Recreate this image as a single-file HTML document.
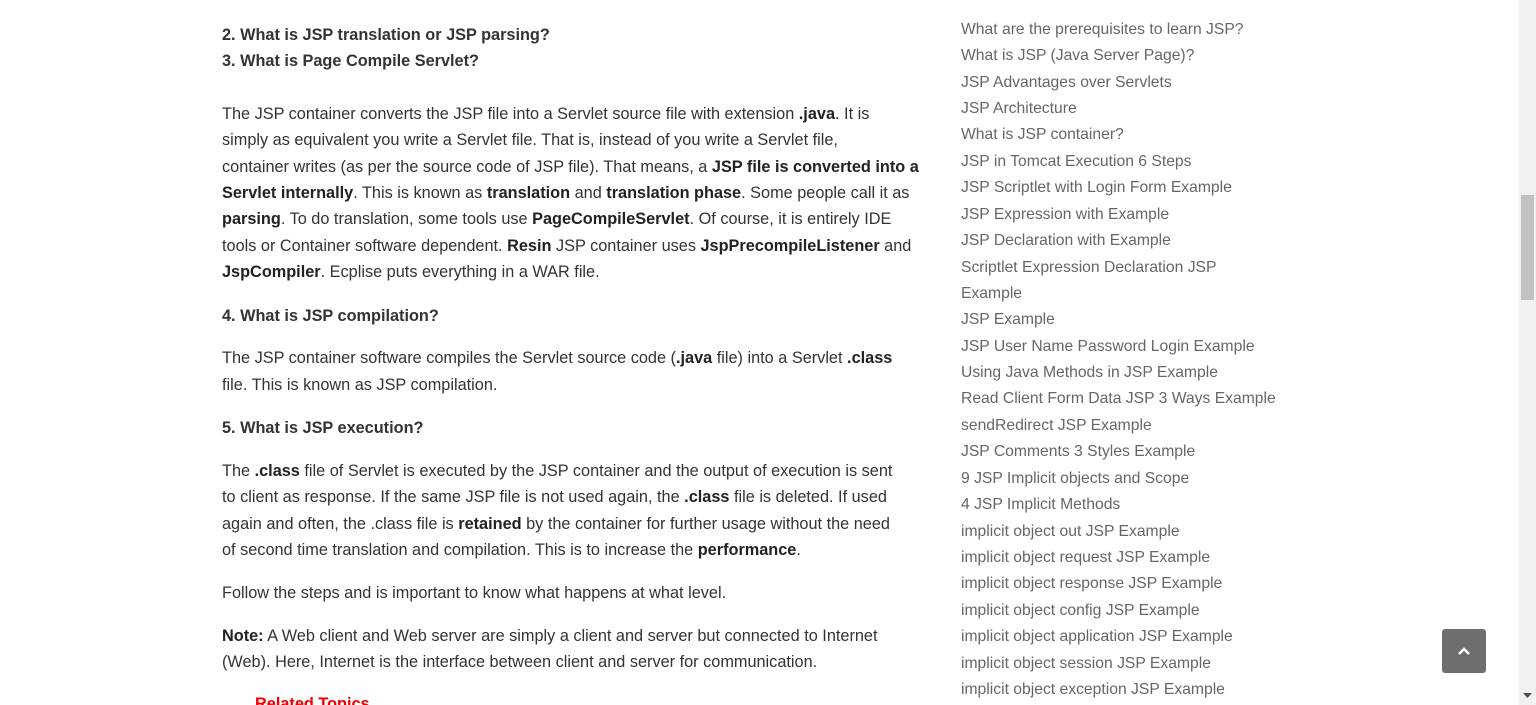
<!DOCTYPE html>
<html><head><meta charset="utf-8"><style>
html,body{margin:0;padding:0;background:#fff;width:1536px;height:705px;overflow:hidden;position:relative;font-family:"Liberation Sans",sans-serif;}
.l{position:absolute;left:222px;white-space:nowrap;font-size:16.3px;line-height:26px;color:#333;}
.h{font-weight:bold;color:#333;}
b{color:#222;}
.s{position:absolute;left:961px;white-space:nowrap;font-size:15.7px;line-height:26px;color:#666;}
.sb{position:absolute;left:1519px;top:0;width:17px;height:705px;background:#f1f1f1;}
.th{position:absolute;left:2px;top:195px;width:13px;height:105px;background:#c1c1c1;}
.btn{position:absolute;left:1442px;top:629px;width:44px;height:44px;background:#6e6e6e;border-radius:3px;}
</style></head><body>
<div class="l h" style="top:22px">2. What is JSP translation or JSP parsing?</div>
<div class="l h" style="top:48px">3. What is Page Compile Servlet?</div>
<div class="l" style="top:101px">The JSP container converts the JSP file into a Servlet source file with extension <b>.java</b>. It is</div>
<div class="l" style="top:127px">simply as equivalent you write a Servlet file. That is, instead of you write a Servlet file,</div>
<div class="l" style="top:154px">container writes (as per the source code of JSP file). That means, a <b>JSP file is converted into a</b></div>
<div class="l" style="top:180px"><b>Servlet internally</b>. This is known as <b>translation</b> and <b>translation phase</b>. Some people call it as</div>
<div class="l" style="top:206px"><b>parsing</b>. To do translation, some tools use <b>PageCompileServlet</b>. Of course, it is entirely IDE</div>
<div class="l" style="top:233px">tools or Container software dependent. <b>Resin</b> JSP container uses <b>JspPrecompileListener</b> and</div>
<div class="l" style="top:259px"><b>JspCompiler</b>. Ecplise puts everything in a WAR file.</div>
<div class="l h" style="top:303px">4. What is JSP compilation?</div>
<div class="l" style="top:345px">The JSP container software compiles the Servlet source code (<b>.java</b> file) into a Servlet <b>.class</b></div>
<div class="l" style="top:372px">file. This is known as JSP compilation.</div>
<div class="l h" style="top:415px">5. What is JSP execution?</div>
<div class="l" style="top:458px">The <b>.class</b> file of Servlet is executed by the JSP container and the output of execution is sent</div>
<div class="l" style="top:484px">to client as response. If the same JSP file is not used again, the <b>.class</b> file is deleted. If used</div>
<div class="l" style="top:511px">again and often, the .class file is <b>retained</b> by the container for further usage without the need</div>
<div class="l" style="top:537px">of second time translation and compilation. This is to increase the <b>performance</b>.</div>
<div class="l" style="top:580px">Follow the steps and is important to know what happens at what level.</div>
<div class="l" style="top:623px"><b>Note:</b> A Web client and Web server are simply a client and server but connected to Internet</div>
<div class="l" style="top:649px">(Web). Here, Internet is the interface between client and server for communication.</div>
<div class="l" style="top:691px;left:255px;color:#e00;font-weight:bold">Related Topics</div>

<div class="s" style="top:17px">What are the prerequisites to learn JSP?</div>
<div class="s" style="top:43px">What is JSP (Java Server Page)?</div>
<div class="s" style="top:70px">JSP Advantages over Servlets</div>
<div class="s" style="top:96px">JSP Architecture</div>
<div class="s" style="top:122px">What is JSP container?</div>
<div class="s" style="top:149px">JSP in Tomcat Execution 6 Steps</div>
<div class="s" style="top:175px">JSP Scriptlet with Login Form Example</div>
<div class="s" style="top:202px">JSP Expression with Example</div>
<div class="s" style="top:228px">JSP Declaration with Example</div>
<div class="s" style="top:255px">Scriptlet Expression Declaration JSP</div>
<div class="s" style="top:281px">Example</div>
<div class="s" style="top:307px">JSP Example</div>
<div class="s" style="top:334px">JSP User Name Password Login Example</div>
<div class="s" style="top:360px">Using Java Methods in JSP Example</div>
<div class="s" style="top:386px">Read Client Form Data JSP 3 Ways Example</div>
<div class="s" style="top:413px">sendRedirect JSP Example</div>
<div class="s" style="top:439px">JSP Comments 3 Styles Example</div>
<div class="s" style="top:466px">9 JSP Implicit objects and Scope</div>
<div class="s" style="top:492px">4 JSP Implicit Methods</div>
<div class="s" style="top:519px">implicit object out JSP Example</div>
<div class="s" style="top:545px">implicit object request JSP Example</div>
<div class="s" style="top:571px">implicit object response JSP Example</div>
<div class="s" style="top:598px">implicit object config JSP Example</div>
<div class="s" style="top:624px">implicit object application JSP Example</div>
<div class="s" style="top:651px">implicit object session JSP Example</div>
<div class="s" style="top:677px">implicit object exception JSP Example</div>

<div class="btn"><svg width="44" height="44" viewBox="0 0 44 44"><path d="M17 25 L22 20 L27 25" stroke="#fff" stroke-width="2.5" fill="none"/></svg></div>
<div class="sb"><div class="th"></div>
<svg style="position:absolute;left:4px;top:693px" width="9" height="6"><path d="M0 0 L9 0 L4.5 5Z" fill="#505050"/></svg></div>
</body></html>
